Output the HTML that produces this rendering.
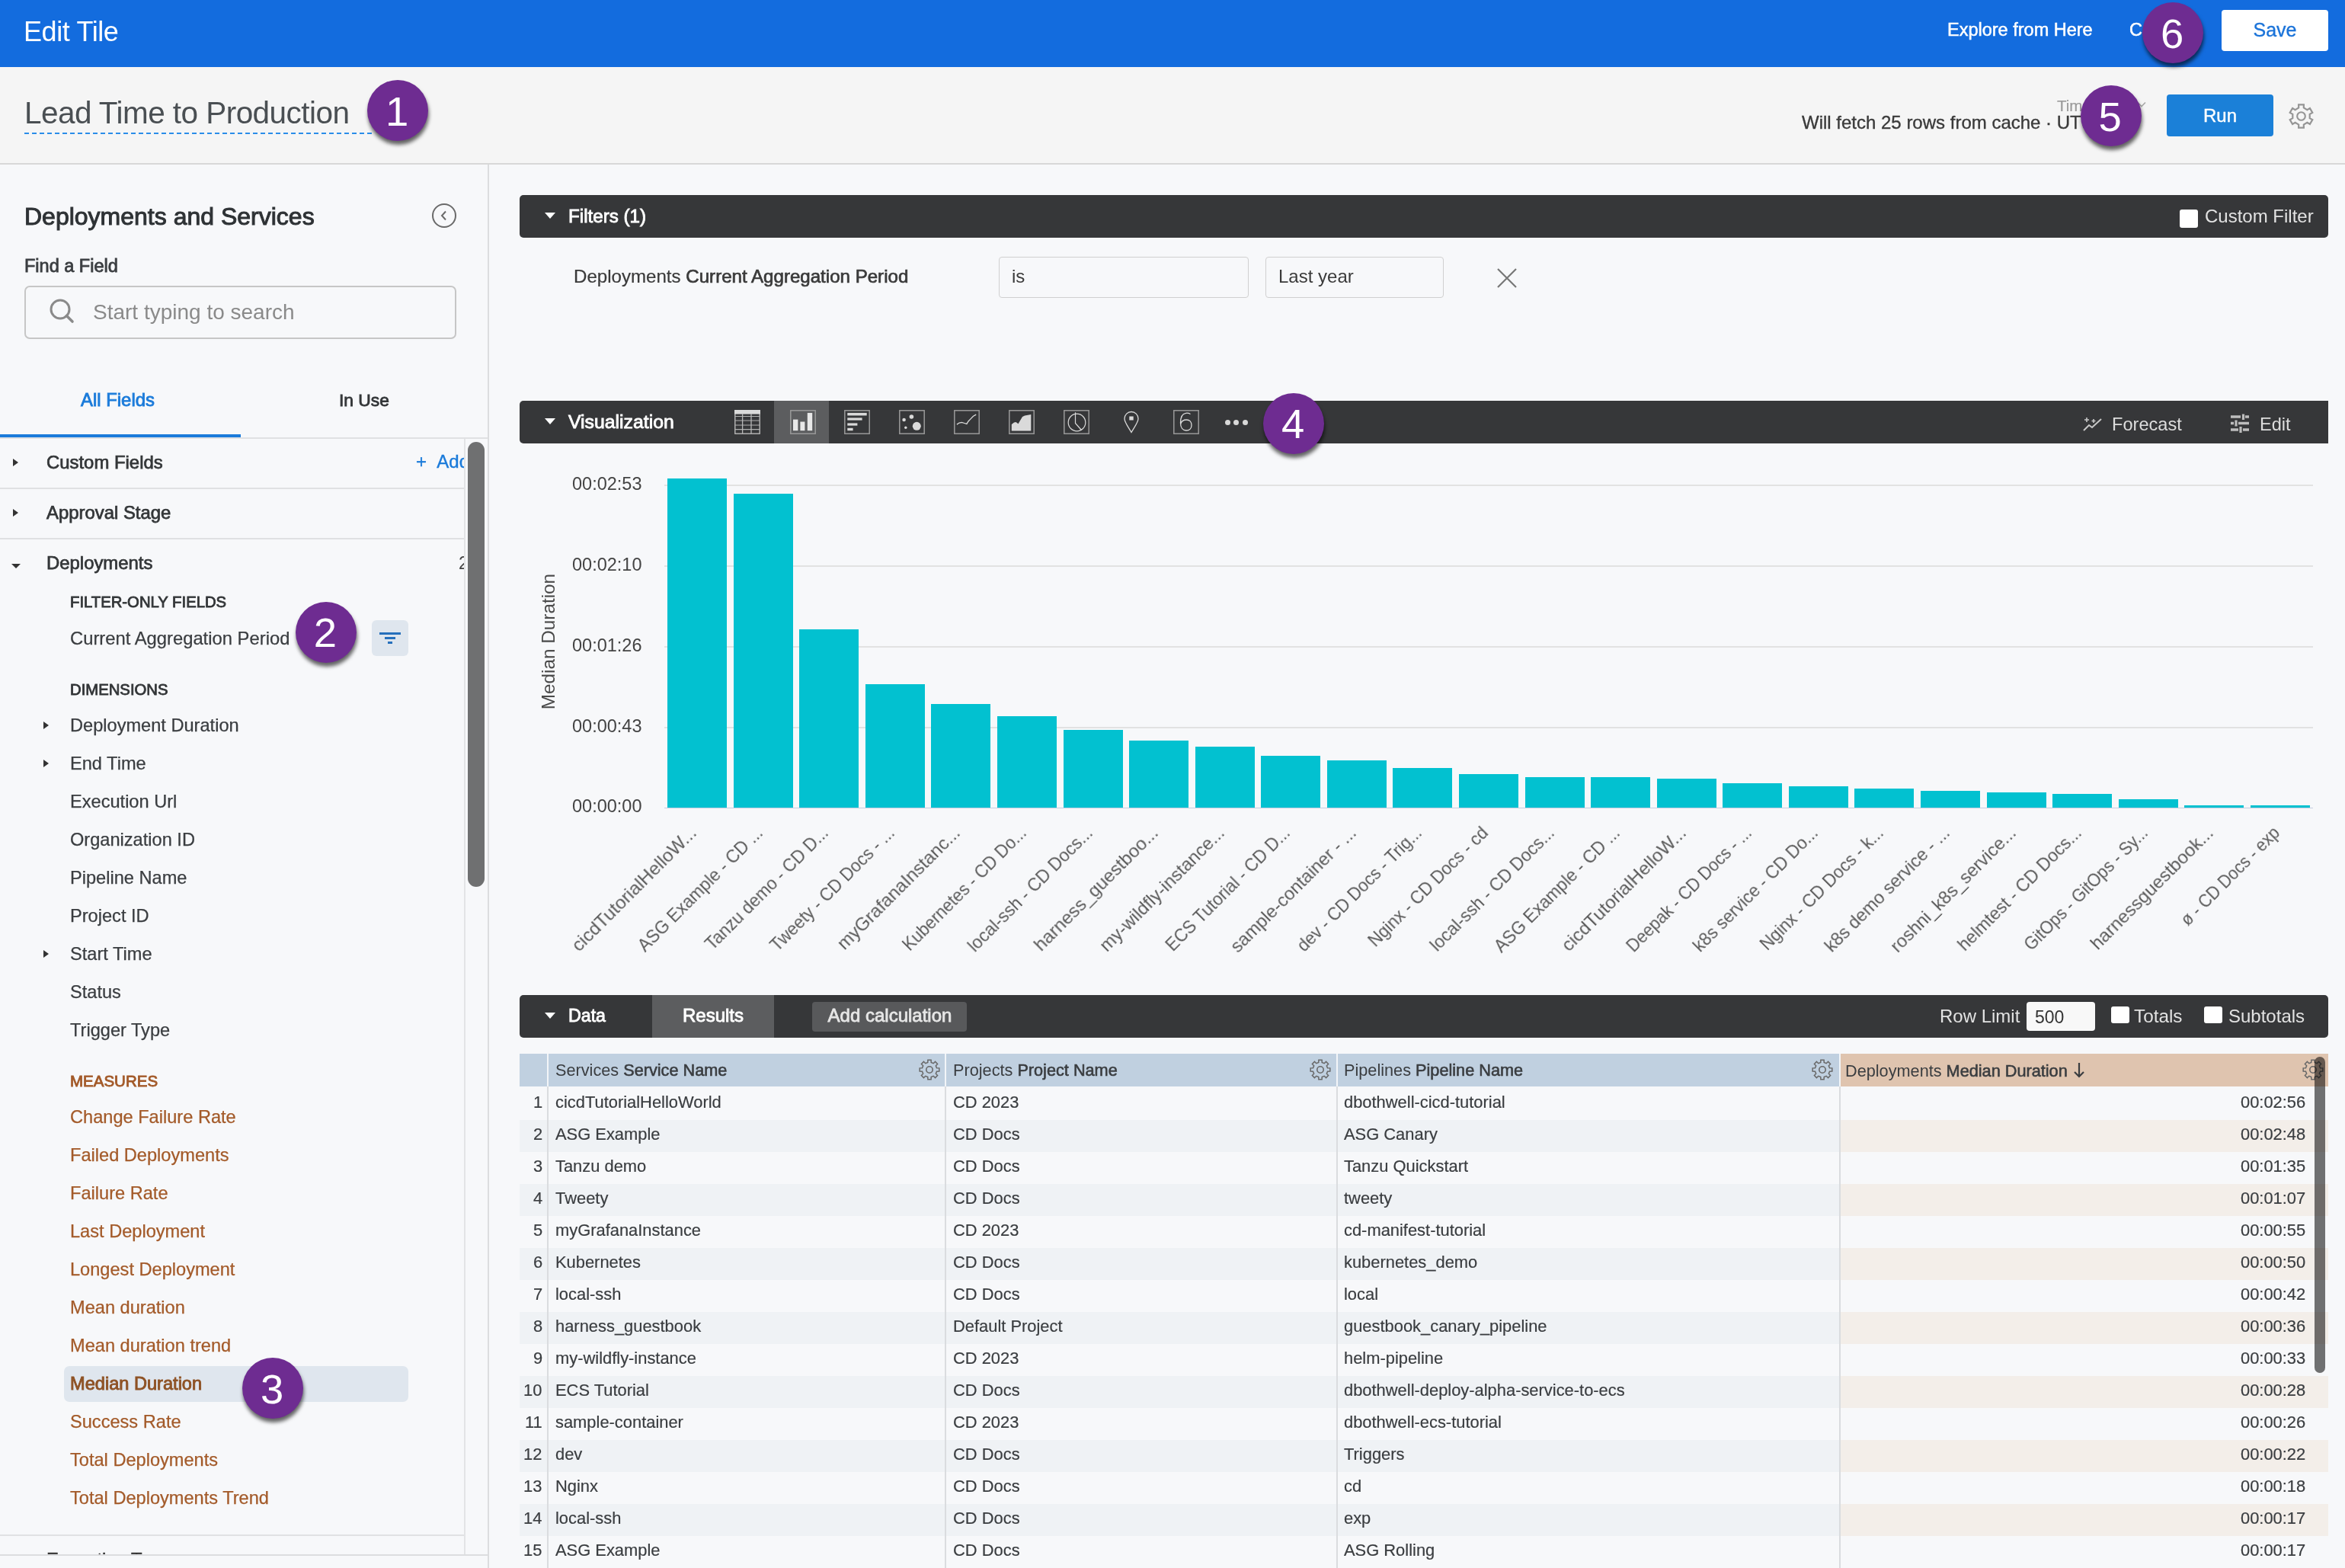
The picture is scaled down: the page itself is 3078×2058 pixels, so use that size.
<!DOCTYPE html>
<html><head><meta charset="utf-8"><title>Edit Tile</title><style>
html,body{margin:0;padding:0;width:3078px;height:2058px;overflow:hidden;background:#F7F8FA;}
body{position:relative;font-family:"Liberation Sans", sans-serif;}
.b{position:absolute;}
.t{position:absolute;white-space:nowrap;line-height:1;will-change:transform;}
.xl{width:400px;text-align:right;font-size:24px;color:#5A5A5A;transform:rotate(-45deg);transform-origin:400px 12px;}
.badge{position:absolute;border-radius:50%;background:#6E2C91;box-shadow:1px 5px 5px rgba(0,0,0,0.6);text-align:center;color:#fff;font-family:"Liberation Sans", sans-serif;}
.badge span{display:block;}
</style></head>
<body>
<div class="b" style="left:0.0px;top:0.0px;width:3078.0px;height:88.0px;background:#136CDE;"></div>
<div class="t" style="left:31.0px;top:24.1px;font-size:36px;color:#FFFFFF;font-weight:normal;letter-spacing:-0.4px;">Edit Tile</div>
<div class="t" style="left:2555.5px;top:28.1px;font-size:23.5px;color:#FFFFFF;font-weight:normal;-webkit-text-stroke:0.5px #FFFFFF;">Explore from Here</div>
<div class="t" style="left:2795.0px;top:28.1px;font-size:23.5px;color:#FFFFFF;font-weight:normal;-webkit-text-stroke:0.5px #FFFFFF;">Cancel</div>
<div class="b" style="left:2916.0px;top:12.6px;width:139.5px;height:54.4px;background:#FFFFFF;border-radius:4px;"></div>
<div class="t" style="left:2486.0px;width:1000px;text-align:center;top:27.1px;font-size:25px;color:#1A73D9;font-weight:normal;-webkit-text-stroke:0.35px #1A73D9;">Save</div>
<div class="b" style="left:0.0px;top:88.0px;width:3078.0px;height:126.0px;background:#F5F5F5;"></div>
<div class="b" style="left:0.0px;top:214.0px;width:3078.0px;height:2.0px;background:#D8D8D8;"></div>
<div class="t" style="left:32.0px;top:127.7px;font-size:40.5px;color:#4A4F53;font-weight:normal;letter-spacing:-0.55px;">Lead Time to Production</div>
<div class="b" style="left:32px;top:174px;width:460px;height:2px;background:repeating-linear-gradient(90deg,#2A8DE9 0 6px,transparent 6px 10px);"></div>
<div class="t" style="left:2364.7px;top:148.7px;font-size:24px;color:#3A3A3A;font-weight:normal;-webkit-text-stroke:0.35px #3A3A3A;">Will fetch 25 rows from cache &middot; UTC</div>
<div class="t" style="left:2700.0px;top:128.6px;font-size:20.5px;color:#9A9A9A;font-weight:normal;-webkit-text-stroke:0.2px #9A9A9A;">Time</div>
<div class="b" style="left:2844.0px;top:124.0px;width:139.5px;height:55.0px;background:#1B80D8;border-radius:4px;"></div>
<div class="t" style="left:2413.8px;width:1000px;text-align:center;top:139.7px;font-size:24px;color:#FFFFFF;font-weight:normal;-webkit-text-stroke:0.4px #FFFFFF;">Run</div>
<svg class="b" style="left:2804px;top:132px" width="14" height="10" viewBox="0 0 14 10"><path d="M2 2.5 L7 7.5 L12 2.5" fill="none" stroke="#A8A8A8" stroke-width="1.6"/></svg>
<svg class="b" style="left:3001.5px;top:133.5px" width="37.0" height="37.0" viewBox="0 0 37.0 37.0"><path d="M15.18 7.49 L15.12 3.37 L21.88 3.37 L21.82 7.49 L26.37 10.12 L29.91 8.01 L33.29 13.86 L29.70 15.87 L29.70 21.13 L33.29 23.14 L29.91 28.99 L26.37 26.88 L21.82 29.51 L21.88 33.63 L15.12 33.63 L15.18 29.51 L10.63 26.88 L7.09 28.99 L3.71 23.14 L7.30 21.13 L7.30 15.87 L3.71 13.86 L7.09 8.01 L10.63 10.12Z" fill="none" stroke="#959595" stroke-width="2.2" stroke-linejoin="miter"/><circle cx="18.5" cy="18.5" r="5.3" fill="none" stroke="#959595" stroke-width="2.1"/></svg>
<div class="b" style="left:0.0px;top:216.0px;width:640.0px;height:1842.0px;background:#F7F8FA;"></div>
<div class="b" style="left:640.0px;top:216.0px;width:2.0px;height:1842.0px;background:#DCDDDF;"></div>
<div class="t" style="left:32.4px;top:267.5px;font-size:32px;color:#2E3235;font-weight:normal;-webkit-text-stroke:1.0px #2E3235;">Deployments and Services</div>
<svg class="b" style="left:565px;top:265px" width="36" height="36" viewBox="0 0 36 36"><circle cx="18" cy="18" r="15" fill="none" stroke="#6A6A6A" stroke-width="2"/><path d="M20 12.5 L15 18 L20 23.5" fill="none" stroke="#6A6A6A" stroke-width="2"/></svg>
<div class="t" style="left:32.0px;top:338.1px;font-size:23.5px;color:#3A3D40;font-weight:normal;-webkit-text-stroke:0.8px #3A3D40;">Find a Field</div>
<div class="b" style="left:32.4px;top:374.8px;width:567.1px;height:70.2px;border:2px solid #C6C6C6;border-radius:7px;box-sizing:border-box;"></div>
<svg class="b" style="left:62px;top:390px" width="36" height="36" viewBox="0 0 36 36"><circle cx="17" cy="16" r="12" fill="none" stroke="#8A8A8A" stroke-width="3"/><path d="M25.5 24.5 L33 32" stroke="#8A8A8A" stroke-width="3.6" stroke-linecap="round"/></svg>
<div class="t" style="left:122.4px;top:396.1px;font-size:28px;color:#8A8A8A;font-weight:normal;">Start typing to search</div>
<div class="t" style="left:105.5px;top:512.8px;font-size:23.9px;color:#1B7BDA;font-weight:normal;-webkit-text-stroke:0.85px #1B7BDA;">All Fields</div>
<div class="t" style="left:444.7px;top:513.7px;font-size:22.8px;color:#333638;font-weight:normal;-webkit-text-stroke:0.85px #333638;">In Use</div>
<div class="b" style="left:0.0px;top:570.0px;width:316.0px;height:4.5px;background:#1B7BDA;"></div>
<div class="b" style="left:0.0px;top:574.0px;width:640.0px;height:2.0px;background:#E0E1E3;"></div>
<div class="b" style="left:608.5px;top:576.0px;width:2.0px;height:1465.0px;background:#E3E4E6;"></div>
<div class="b" style="left:613.6px;top:580.0px;width:22.4px;height:584.4px;background:rgba(0,0,0,0.55);border-radius:11px;"></div>
<div class="b" style="left:17.0px;top:602.0px;width:0;height:0;border-top:5.5px solid transparent;border-bottom:5.5px solid transparent;border-left:7px solid #333;"></div>
<div class="t" style="left:60.5px;top:594.8px;font-size:23.9px;color:#333638;font-weight:normal;-webkit-text-stroke:0.75px #333638;">Custom Fields</div>
<div class="b" style="left:540px;top:590px;width:69px;height:36px;overflow:hidden;"><div class="t" style="left:6px;top:4px;font-size:24px;color:#1B7BDA;-webkit-text-stroke:0.4px #1B7BDA;">+ &nbsp;Add</div></div>
<div class="b" style="left:0.0px;top:639.5px;width:609.0px;height:2.0px;background:#E0E1E3;"></div>
<div class="b" style="left:17.0px;top:668.0px;width:0;height:0;border-top:5.5px solid transparent;border-bottom:5.5px solid transparent;border-left:7px solid #333;"></div>
<div class="t" style="left:60.5px;top:660.8px;font-size:23.9px;color:#333638;font-weight:normal;-webkit-text-stroke:0.75px #333638;">Approval Stage</div>
<div class="b" style="left:0.0px;top:706.0px;width:609.0px;height:2.0px;background:#E0E1E3;"></div>
<div class="b" style="left:15.0px;top:739.5px;width:0;height:0;border-left:6px solid transparent;border-right:6px solid transparent;border-top:6px solid #333;"></div>
<div class="t" style="left:60.5px;top:726.8px;font-size:23.9px;color:#333638;font-weight:normal;-webkit-text-stroke:0.75px #333638;">Deployments</div>
<div class="b" style="left:598px;top:725px;width:11px;height:30px;overflow:hidden;"><div class="t" style="left:4px;top:3px;font-size:23px;color:#444;">25</div></div>
<div class="t" style="left:92.3px;top:780.2px;font-size:20.3px;color:#333638;font-weight:normal;-webkit-text-stroke:0.85px #333638;">FILTER-ONLY FIELDS</div>
<div class="t" style="left:92.3px;top:825.9px;font-size:23.8px;color:#3A3D40;font-weight:normal;-webkit-text-stroke:0.25px #3A3D40;">Current Aggregation Period</div>
<div class="b" style="left:488.0px;top:814.0px;width:48.0px;height:47.0px;background:#DFE6EE;border-radius:6px;"></div>
<svg class="b" style="left:496px;top:822px" width="32" height="32" viewBox="0 0 32 32"><path d="M2 9.5h28M9 15.5h14M13 21.5h6" stroke="#2670BC" stroke-width="2.8"/></svg>
<div class="t" style="left:92.3px;top:894.8px;font-size:20.3px;color:#333638;font-weight:normal;-webkit-text-stroke:0.85px #333638;">DIMENSIONS</div>
<div class="b" style="left:57.0px;top:947.0px;width:0;height:0;border-top:5.5px solid transparent;border-bottom:5.5px solid transparent;border-left:7px solid #333;"></div>
<div class="t" style="left:92.4px;top:940.5px;font-size:23.6px;color:#3A3D40;font-weight:normal;-webkit-text-stroke:0.25px #3A3D40;">Deployment Duration</div>
<div class="b" style="left:57.0px;top:997.0px;width:0;height:0;border-top:5.5px solid transparent;border-bottom:5.5px solid transparent;border-left:7px solid #333;"></div>
<div class="t" style="left:92.4px;top:990.5px;font-size:23.6px;color:#3A3D40;font-weight:normal;-webkit-text-stroke:0.25px #3A3D40;">End Time</div>
<div class="t" style="left:92.4px;top:1040.5px;font-size:23.6px;color:#3A3D40;font-weight:normal;-webkit-text-stroke:0.25px #3A3D40;">Execution Url</div>
<div class="t" style="left:92.4px;top:1090.5px;font-size:23.6px;color:#3A3D40;font-weight:normal;-webkit-text-stroke:0.25px #3A3D40;">Organization ID</div>
<div class="t" style="left:92.4px;top:1140.5px;font-size:23.6px;color:#3A3D40;font-weight:normal;-webkit-text-stroke:0.25px #3A3D40;">Pipeline Name</div>
<div class="t" style="left:92.4px;top:1190.5px;font-size:23.6px;color:#3A3D40;font-weight:normal;-webkit-text-stroke:0.25px #3A3D40;">Project ID</div>
<div class="b" style="left:57.0px;top:1247.0px;width:0;height:0;border-top:5.5px solid transparent;border-bottom:5.5px solid transparent;border-left:7px solid #333;"></div>
<div class="t" style="left:92.4px;top:1240.5px;font-size:23.6px;color:#3A3D40;font-weight:normal;-webkit-text-stroke:0.25px #3A3D40;">Start Time</div>
<div class="t" style="left:92.4px;top:1290.5px;font-size:23.6px;color:#3A3D40;font-weight:normal;-webkit-text-stroke:0.25px #3A3D40;">Status</div>
<div class="t" style="left:92.4px;top:1340.5px;font-size:23.6px;color:#3A3D40;font-weight:normal;-webkit-text-stroke:0.25px #3A3D40;">Trigger Type</div>
<div class="t" style="left:92.3px;top:1408.6px;font-size:20.5px;color:#A35A29;font-weight:normal;-webkit-text-stroke:0.85px #A35A29;">MEASURES</div>
<div class="b" style="left:84.0px;top:1792.5px;width:452.0px;height:47.0px;background:#DFE6EE;border-radius:7px;"></div>
<div class="t" style="left:92.0px;top:1454.8px;font-size:23.6px;color:#A35A29;font-weight:normal;-webkit-text-stroke:0.25px #A35A29;">Change Failure Rate</div>
<div class="t" style="left:92.0px;top:1504.8px;font-size:23.6px;color:#A35A29;font-weight:normal;-webkit-text-stroke:0.25px #A35A29;">Failed Deployments</div>
<div class="t" style="left:92.0px;top:1554.8px;font-size:23.6px;color:#A35A29;font-weight:normal;-webkit-text-stroke:0.25px #A35A29;">Failure Rate</div>
<div class="t" style="left:92.0px;top:1604.8px;font-size:23.6px;color:#A35A29;font-weight:normal;-webkit-text-stroke:0.25px #A35A29;">Last Deployment</div>
<div class="t" style="left:92.0px;top:1654.8px;font-size:23.6px;color:#A35A29;font-weight:normal;-webkit-text-stroke:0.25px #A35A29;">Longest Deployment</div>
<div class="t" style="left:92.0px;top:1704.8px;font-size:23.6px;color:#A35A29;font-weight:normal;-webkit-text-stroke:0.25px #A35A29;">Mean duration</div>
<div class="t" style="left:92.0px;top:1754.8px;font-size:23.6px;color:#A35A29;font-weight:normal;-webkit-text-stroke:0.25px #A35A29;">Mean duration trend</div>
<div class="t" style="left:92.0px;top:1804.8px;font-size:23.6px;color:#8E5225;font-weight:normal;-webkit-text-stroke:0.9px #8E5225;">Median Duration</div>
<div class="t" style="left:92.0px;top:1854.8px;font-size:23.6px;color:#A35A29;font-weight:normal;-webkit-text-stroke:0.25px #A35A29;">Success Rate</div>
<div class="t" style="left:92.0px;top:1904.8px;font-size:23.6px;color:#A35A29;font-weight:normal;-webkit-text-stroke:0.25px #A35A29;">Total Deployments</div>
<div class="t" style="left:92.0px;top:1954.8px;font-size:23.6px;color:#A35A29;font-weight:normal;-webkit-text-stroke:0.25px #A35A29;">Total Deployments Trend</div>
<div class="b" style="left:0.0px;top:2013.5px;width:609.0px;height:2.0px;background:#E0E1E3;"></div>
<div class="b" style="left:0;top:2020px;width:609px;height:20px;overflow:hidden;"><div class="t" style="left:61px;top:15px;font-size:23.9px;color:#333;-webkit-text-stroke:0.45px #333;">Execution Type</div></div>
<div class="b" style="left:0.0px;top:2039.5px;width:640.0px;height:2.0px;background:#DCDDDF;"></div>
<div class="b" style="left:0.0px;top:2041.5px;width:640.0px;height:16.5px;background:#F7F8FA;"></div>
<div class="b" style="left:642.0px;top:216.0px;width:2436.0px;height:1842.0px;background:#F7F8FA;"></div>
<div class="b" style="left:682.0px;top:256.0px;width:2374.0px;height:55.5px;background:#363739;border-radius:5px;"></div>
<div class="b" style="left:714.5px;top:278.8px;width:0;height:0;border-left:7.5px solid transparent;border-right:7.5px solid transparent;border-top:8.5px solid #FFFFFF;"></div>
<div class="t" style="left:745.8px;top:271.8px;font-size:24.2px;color:#FFFFFF;font-weight:normal;-webkit-text-stroke:0.85px #FFFFFF;">Filters (1)</div>
<div class="b" style="left:2861.0px;top:275.0px;width:24.0px;height:24.0px;background:#FFFFFF;border-radius:3px;"></div>
<div class="t" style="left:2893.5px;top:271.7px;font-size:24px;color:#E2E2E2;font-weight:normal;">Custom Filter</div>
<div class="t" style="left:752.6px;top:351.4px;font-size:24.1px;color:#3A3A3A;font-weight:normal;-webkit-text-stroke:0.2px #3A3A3A;">Deployments <span style="-webkit-text-stroke:0.7px #3A3A3A">Current Aggregation Period</span></div>
<div class="b" style="left:1310.7px;top:336.6px;width:328.3px;height:54.2px;border:1.5px solid #D0D0D0;border-radius:4px;box-sizing:border-box;"></div>
<div class="t" style="left:1327.8px;top:351.1px;font-size:24px;color:#3A3A3A;font-weight:normal;">is</div>
<div class="b" style="left:1661.0px;top:336.6px;width:234.0px;height:54.2px;border:1.5px solid #D0D0D0;border-radius:4px;box-sizing:border-box;"></div>
<div class="t" style="left:1678.0px;top:351.1px;font-size:24px;color:#3A3A3A;font-weight:normal;">Last year</div>
<svg class="b" style="left:1964px;top:351px" width="28" height="28" viewBox="0 0 28 28"><path d="M2 2L26 26M26 2L2 26" stroke="#777" stroke-width="2.2"/></svg>
<div class="b" style="left:682.0px;top:526.4px;width:2374.0px;height:55.2px;background:#363739;border-radius:5px 0 0 5px;"></div>
<div class="b" style="left:714.5px;top:548.8px;width:0;height:0;border-left:7.5px solid transparent;border-right:7.5px solid transparent;border-top:8.5px solid #FFFFFF;"></div>
<div class="t" style="left:745.5px;top:542.0px;font-size:24.8px;color:#FFFFFF;font-weight:normal;-webkit-text-stroke:0.85px #FFFFFF;">Visualization</div>
<div class="b" style="left:1016.3px;top:526.4px;width:71.7px;height:55.2px;background:#5C5D5F;"></div>
<svg class="b" style="left:964px;top:538.4px" width="34" height="32" viewBox="0 0 34 32"><rect x="0.8" y="0.8" width="32.4" height="30.4" fill="none" stroke="#B8B8B8" stroke-width="1.4"/><rect x="0" y="0" width="34" height="5.5" fill="#DADADA"/><path d="M0.5 8.5H33.5" stroke="#B0B0B0" stroke-width="1.2"/><path d="M0.5 14H33.5" stroke="#B0B0B0" stroke-width="1.2"/><path d="M0.5 20H33.5" stroke="#B0B0B0" stroke-width="1.2"/><path d="M0.5 25.7H33.5" stroke="#B0B0B0" stroke-width="1.2"/><path d="M10.6 5V31" stroke="#B8B8B8" stroke-width="1.3"/><path d="M22 5V31" stroke="#B8B8B8" stroke-width="1.3"/></svg>
<svg class="b" style="left:1036.6px;top:538.4px" width="34" height="32" viewBox="0 0 34 32"><rect x="0.8" y="0.8" width="32.4" height="30.4" fill="none" stroke="#9A9A9A" stroke-width="1.5"/><rect x="4" y="12.6" width="6.4" height="14.6" fill="#E8E8E8"/><rect x="13.4" y="15.5" width="6" height="11.7" fill="#E8E8E8"/><rect x="22.8" y="3.9" width="6.4" height="23.3" fill="#E8E8E8"/></svg>
<svg class="b" style="left:1108px;top:538.4px" width="34" height="32" viewBox="0 0 34 32"><rect x="0.8" y="0.8" width="32.4" height="30.4" fill="none" stroke="#9A9A9A" stroke-width="1.5"/><rect x="4.3" y="3.9" width="25.4" height="3.5" fill="#DADADA"/><rect x="4.3" y="10.4" width="19.3" height="3.2" fill="#DADADA"/><rect x="4.3" y="17.4" width="13.1" height="3.2" fill="#DADADA"/><rect x="4.3" y="23.8" width="7.3" height="3.4" fill="#DADADA"/></svg>
<svg class="b" style="left:1180.4px;top:538.4px" width="34" height="32" viewBox="0 0 34 32"><rect x="0.8" y="0.8" width="32.4" height="30.4" fill="none" stroke="#9A9A9A" stroke-width="1.5"/><circle cx="16.4" cy="9" r="2.8" fill="#DADADA"/><circle cx="6.6" cy="13" r="2.3" fill="#DADADA"/><circle cx="8.8" cy="23.2" r="1.7" fill="#DADADA"/><circle cx="23.3" cy="21.3" r="5.5" fill="#DADADA"/></svg>
<svg class="b" style="left:1252px;top:538.4px" width="34" height="32" viewBox="0 0 34 32"><rect x="0.8" y="0.8" width="32.4" height="30.4" fill="none" stroke="#9A9A9A" stroke-width="1.5"/><path d="M3.9 19.1 L7 17 L10.4 16.3 L14 17.5 L16.9 18.4 L19 15 L22 11.9 L25.5 8.3 L29.2 6.1" fill="none" stroke="#DADADA" stroke-width="1.3"/></svg>
<svg class="b" style="left:1324.3px;top:538.4px" width="34" height="32" viewBox="0 0 34 32"><rect x="0.8" y="0.8" width="32.4" height="30.4" fill="none" stroke="#9A9A9A" stroke-width="1.5"/><path d="M3.8 27.4 L3.8 19 L7 16.5 L9.5 16 L12.5 18.2 L15 14 L18 9 L21 7.5 L29.3 6 L29.3 27.4 Z" fill="#DADADA"/></svg>
<svg class="b" style="left:1396px;top:538.4px" width="34" height="32" viewBox="0 0 34 32"><rect x="0.8" y="0.8" width="32.4" height="30.4" fill="none" stroke="#9A9A9A" stroke-width="1.5"/><circle cx="17.5" cy="16.5" r="11.3" fill="none" stroke="#DADADA" stroke-width="1.2"/><path d="M15.5 3.2 V17.5 L23.5 26.5" fill="none" stroke="#DADADA" stroke-width="1.2"/></svg>
<svg class="b" style="left:1474px;top:539px" width="22" height="30" viewBox="0 0 22 30"><path d="M11 28.5 C 6 20 2 15 2 10.5 A 9 9 0 0 1 20 10.5 C 20 15 16 20 11 28.5 Z" fill="none" stroke="#DADADA" stroke-width="1.3"/><rect x="8.3" y="7.5" width="5.4" height="5" fill="#DADADA"/></svg>
<svg class="b" style="left:1540px;top:538.4px" width="34" height="32" viewBox="0 0 34 32"><rect x="0.8" y="0.8" width="32.4" height="30.4" fill="none" stroke="#9A9A9A" stroke-width="1.5"/><path d="M22.5 5.5 C 20.5 4.2 18.5 4 16.5 4.3 C 11.5 5 9.5 10 9.5 17 C 9.5 23.5 12.5 27 17 27 C 21.5 27 24 24 24 20 C 24 16 21.5 13 17.5 13 C 13.5 13 10.5 15.5 9.7 18.5" fill="none" stroke="#DADADA" stroke-width="1.3"/></svg>
<div class="b" style="left:1607.5px;top:550.5px;width:7px;height:7px;border-radius:50%;background:#D8D8D8;"></div>
<div class="b" style="left:1619.0px;top:550.5px;width:7px;height:7px;border-radius:50%;background:#D8D8D8;"></div>
<div class="b" style="left:1630.5px;top:550.5px;width:7px;height:7px;border-radius:50%;background:#D8D8D8;"></div>
<svg class="b" style="left:2733px;top:545px" width="27" height="22" viewBox="0 0 27 22"><path d="M2 20 L9 13 L13 16 L25 5" fill="none" stroke="#C8C8C8" stroke-width="2"/><path d="M6 3v6M3 6h6M15 5v5M12.5 7.5h5" stroke="#C8C8C8" stroke-width="1.6"/></svg>
<div class="t" style="left:2772.0px;top:545.5px;font-size:23.6px;color:#DDDDDD;font-weight:normal;">Forecast</div>
<svg class="b" style="left:2927px;top:543px" width="26" height="25" viewBox="0 0 26 25"><path d="M1 4h13M20 4h5M1 12.5h4M11 12.5h14M1 21h10M17 21h8" stroke="#BDBDBD" stroke-width="3.4"/><path d="M17.5 0.5v7.5M8 8.5v8M14 17v8" stroke="#BDBDBD" stroke-width="3.2"/></svg>
<div class="t" style="left:2965.5px;top:545.5px;font-size:23.6px;color:#DDDDDD;font-weight:normal;">Edit</div>
<div class="b" style="left:872.0px;top:635.9px;width:2164.0px;height:2.0px;background:#E2E2E2;"></div>
<div class="t" style="right:2236.0px;text-align:right;top:623.9px;font-size:23.5px;color:#444444;font-weight:normal;">00:02:53</div>
<div class="b" style="left:872.0px;top:742.0px;width:2164.0px;height:2.0px;background:#E2E2E2;"></div>
<div class="t" style="right:2236.0px;text-align:right;top:730.0px;font-size:23.5px;color:#444444;font-weight:normal;">00:02:10</div>
<div class="b" style="left:872.0px;top:847.8px;width:2164.0px;height:2.0px;background:#E2E2E2;"></div>
<div class="t" style="right:2236.0px;text-align:right;top:835.7px;font-size:23.5px;color:#444444;font-weight:normal;">00:01:26</div>
<div class="b" style="left:872.0px;top:953.7px;width:2164.0px;height:2.0px;background:#E2E2E2;"></div>
<div class="t" style="right:2236.0px;text-align:right;top:941.7px;font-size:23.5px;color:#444444;font-weight:normal;">00:00:43</div>
<div class="t" style="right:2236.0px;text-align:right;top:1047.3px;font-size:23.5px;color:#444444;font-weight:normal;">00:00:00</div>
<div class="b" style="left:876.0px;top:628.0px;width:78.0px;height:432.0px;background:#02C1D0;"></div>
<div class="b" style="left:962.6px;top:647.8px;width:78.0px;height:412.2px;background:#02C1D0;"></div>
<div class="b" style="left:1049.2px;top:826.0px;width:78.0px;height:234.0px;background:#02C1D0;"></div>
<div class="b" style="left:1135.7px;top:897.8px;width:78.0px;height:162.2px;background:#02C1D0;"></div>
<div class="b" style="left:1222.3px;top:923.8px;width:78.0px;height:136.2px;background:#02C1D0;"></div>
<div class="b" style="left:1308.9px;top:939.7px;width:78.0px;height:120.3px;background:#02C1D0;"></div>
<div class="b" style="left:1395.5px;top:958.0px;width:78.0px;height:102.0px;background:#02C1D0;"></div>
<div class="b" style="left:1482.1px;top:972.0px;width:78.0px;height:88.0px;background:#02C1D0;"></div>
<div class="b" style="left:1568.6px;top:980.0px;width:78.0px;height:80.0px;background:#02C1D0;"></div>
<div class="b" style="left:1655.2px;top:992.0px;width:78.0px;height:68.0px;background:#02C1D0;"></div>
<div class="b" style="left:1741.8px;top:998.0px;width:78.0px;height:62.0px;background:#02C1D0;"></div>
<div class="b" style="left:1828.4px;top:1007.8px;width:78.0px;height:52.2px;background:#02C1D0;"></div>
<div class="b" style="left:1915.0px;top:1015.8px;width:78.0px;height:44.2px;background:#02C1D0;"></div>
<div class="b" style="left:2001.5px;top:1020.0px;width:78.0px;height:40.0px;background:#02C1D0;"></div>
<div class="b" style="left:2088.1px;top:1020.0px;width:78.0px;height:40.0px;background:#02C1D0;"></div>
<div class="b" style="left:2174.7px;top:1021.8px;width:78.0px;height:38.2px;background:#02C1D0;"></div>
<div class="b" style="left:2261.3px;top:1028.0px;width:78.0px;height:32.0px;background:#02C1D0;"></div>
<div class="b" style="left:2347.9px;top:1031.6px;width:78.0px;height:28.4px;background:#02C1D0;"></div>
<div class="b" style="left:2434.4px;top:1035.4px;width:78.0px;height:24.6px;background:#02C1D0;"></div>
<div class="b" style="left:2521.0px;top:1037.7px;width:78.0px;height:22.3px;background:#02C1D0;"></div>
<div class="b" style="left:2607.6px;top:1040.0px;width:78.0px;height:20.0px;background:#02C1D0;"></div>
<div class="b" style="left:2694.2px;top:1042.0px;width:78.0px;height:18.0px;background:#02C1D0;"></div>
<div class="b" style="left:2780.8px;top:1049.4px;width:78.0px;height:10.6px;background:#02C1D0;"></div>
<div class="b" style="left:2867.3px;top:1057.4px;width:78.0px;height:2.6px;background:#02C1D0;"></div>
<div class="b" style="left:2953.9px;top:1057.4px;width:78.0px;height:2.6px;background:#02C1D0;"></div>
<div class="b" style="left:872.0px;top:1059.5px;width:2164.0px;height:1.5px;background:#C5CDE0;"></div>
<div class="t" style="left:620px;top:829.5px;width:200px;text-align:center;font-size:24.3px;color:#4A4A4A;transform:rotate(-90deg);transform-origin:100px 12px;">Median Duration</div>
<div class="t xl" style="left:510.0px;top:1077px;transform:rotate(-45deg) scaleX(1.01);">cicdTutorialHelloW...</div>
<div class="t xl" style="left:596.6px;top:1077px;transform:rotate(-45deg) scaleX(0.944);">ASG Example - CD ...</div>
<div class="t xl" style="left:683.2px;top:1077px;transform:rotate(-45deg) scaleX(0.941);">Tanzu demo - CD D...</div>
<div class="t xl" style="left:769.7px;top:1077px;transform:rotate(-45deg) scaleX(0.935);">Tweety - CD Docs - ...</div>
<div class="t xl" style="left:856.3px;top:1077px;transform:rotate(-45deg) scaleX(1.002);">myGrafanaInstanc...</div>
<div class="t xl" style="left:942.9px;top:1077px;transform:rotate(-45deg) scaleX(0.926);">Kubernetes - CD Do...</div>
<div class="t xl" style="left:1029.5px;top:1077px;transform:rotate(-45deg) scaleX(0.951);">local-ssh - CD Docs...</div>
<div class="t xl" style="left:1116.1px;top:1077px;transform:rotate(-45deg) scaleX(1.007);">harness_guestboo...</div>
<div class="t xl" style="left:1202.6px;top:1077px;transform:rotate(-45deg) scaleX(0.988);">my-wildfly-instance...</div>
<div class="t xl" style="left:1289.2px;top:1077px;transform:rotate(-45deg) scaleX(0.934);">ECS Tutorial - CD D...</div>
<div class="t xl" style="left:1375.8px;top:1077px;transform:rotate(-45deg) scaleX(0.984);">sample-container - ...</div>
<div class="t xl" style="left:1462.4px;top:1077px;transform:rotate(-45deg) scaleX(0.928);">dev - CD Docs - Trig...</div>
<div class="t xl" style="left:1549.0px;top:1077px;transform:rotate(-45deg) scaleX(0.937);">Nginx - CD Docs - cd</div>
<div class="t xl" style="left:1635.5px;top:1077px;transform:rotate(-45deg) scaleX(0.946);">local-ssh - CD Docs...</div>
<div class="t xl" style="left:1722.1px;top:1077px;transform:rotate(-45deg) scaleX(0.95);">ASG Example - CD ...</div>
<div class="t xl" style="left:1808.7px;top:1077px;transform:rotate(-45deg) scaleX(1.008);">cicdTutorialHelloW...</div>
<div class="t xl" style="left:1895.3px;top:1077px;transform:rotate(-45deg) scaleX(0.915);">Deepak - CD Docs - ...</div>
<div class="t xl" style="left:1981.9px;top:1077px;transform:rotate(-45deg) scaleX(0.945);">k8s service - CD Do...</div>
<div class="t xl" style="left:2068.4px;top:1077px;transform:rotate(-45deg) scaleX(0.938);">Nginx - CD Docs - k...</div>
<div class="t xl" style="left:2155.0px;top:1077px;transform:rotate(-45deg) scaleX(0.969);">k8s demo service - ...</div>
<div class="t xl" style="left:2241.6px;top:1077px;transform:rotate(-45deg) scaleX(0.983);">roshni_k8s_service...</div>
<div class="t xl" style="left:2328.2px;top:1077px;transform:rotate(-45deg) scaleX(0.959);">helmtest - CD Docs...</div>
<div class="t xl" style="left:2414.8px;top:1077px;transform:rotate(-45deg) scaleX(0.916);">GitOps - GitOps - Sy...</div>
<div class="t xl" style="left:2501.3px;top:1077px;transform:rotate(-45deg) scaleX(1.002);">harnessguestbook...</div>
<div class="t xl" style="left:2587.9px;top:1077px;transform:rotate(-45deg) scaleX(0.897);">&#248; - CD Docs - exp</div>
<div class="b" style="left:682.0px;top:1306.0px;width:2374.0px;height:56.0px;background:#363739;border-radius:5px;"></div>
<div class="b" style="left:714.5px;top:1328.8px;width:0;height:0;border-left:7.5px solid transparent;border-right:7.5px solid transparent;border-top:8.5px solid #FFFFFF;"></div>
<div class="t" style="left:746.0px;top:1321.7px;font-size:23.2px;color:#FFFFFF;font-weight:normal;-webkit-text-stroke:0.85px #FFFFFF;">Data</div>
<div class="b" style="left:856.0px;top:1306.0px;width:159.7px;height:56.0px;background:#5C5D5F;"></div>
<div class="t" style="left:435.9px;width:1000px;text-align:center;top:1321.0px;font-size:24px;color:#FFFFFF;font-weight:normal;-webkit-text-stroke:0.85px #FFFFFF;">Results</div>
<div class="b" style="left:1066.4px;top:1314.5px;width:203.0px;height:39.1px;background:#58595B;border-radius:4px;"></div>
<div class="t" style="left:667.9px;width:1000px;text-align:center;top:1321.0px;font-size:24px;color:#E6E6E6;font-weight:normal;-webkit-text-stroke:0.8px #E6E6E6;">Add calculation</div>
<div class="t" style="left:2546.0px;top:1322.2px;font-size:24px;color:#E2E2E2;font-weight:normal;">Row Limit</div>
<div class="b" style="left:2660.4px;top:1314.5px;width:89.3px;height:38.9px;background:#F8F8F8;border-radius:4px;"></div>
<div class="t" style="left:2670.7px;top:1323.5px;font-size:23px;color:#333333;font-weight:normal;">500</div>
<div class="b" style="left:2771.0px;top:1320.5px;width:23.5px;height:22.5px;background:#FFFFFF;border-radius:3px;"></div>
<div class="t" style="left:2801.0px;top:1321.7px;font-size:24.3px;color:#E2E2E2;font-weight:normal;">Totals</div>
<div class="b" style="left:2893.0px;top:1320.5px;width:23.5px;height:22.5px;background:#FFFFFF;border-radius:3px;"></div>
<div class="t" style="left:2924.5px;top:1322.0px;font-size:24px;color:#E2E2E2;font-weight:normal;">Subtotals</div>
<div class="b" style="left:682.0px;top:1382.5px;width:1733.4px;height:43.3px;background:#C0D0E0;"></div>
<div class="b" style="left:2415.4px;top:1382.5px;width:640.6px;height:43.3px;background:#DFC4AF;"></div>
<div class="b" style="left:682.0px;top:1469.7px;width:1733.4px;height:42.0px;background:#EFF2F5;"></div>
<div class="b" style="left:2415.4px;top:1469.7px;width:640.6px;height:42.0px;background:#F3EEE9;"></div>
<div class="b" style="left:682.0px;top:1553.7px;width:1733.4px;height:42.0px;background:#EFF2F5;"></div>
<div class="b" style="left:2415.4px;top:1553.7px;width:640.6px;height:42.0px;background:#F3EEE9;"></div>
<div class="b" style="left:682.0px;top:1637.7px;width:1733.4px;height:42.0px;background:#EFF2F5;"></div>
<div class="b" style="left:2415.4px;top:1637.7px;width:640.6px;height:42.0px;background:#F3EEE9;"></div>
<div class="b" style="left:682.0px;top:1721.7px;width:1733.4px;height:42.0px;background:#EFF2F5;"></div>
<div class="b" style="left:2415.4px;top:1721.7px;width:640.6px;height:42.0px;background:#F3EEE9;"></div>
<div class="b" style="left:682.0px;top:1805.7px;width:1733.4px;height:42.0px;background:#EFF2F5;"></div>
<div class="b" style="left:2415.4px;top:1805.7px;width:640.6px;height:42.0px;background:#F3EEE9;"></div>
<div class="b" style="left:682.0px;top:1889.7px;width:1733.4px;height:42.0px;background:#EFF2F5;"></div>
<div class="b" style="left:2415.4px;top:1889.7px;width:640.6px;height:42.0px;background:#F3EEE9;"></div>
<div class="b" style="left:682.0px;top:1973.7px;width:1733.4px;height:42.0px;background:#EFF2F5;"></div>
<div class="b" style="left:2415.4px;top:1973.7px;width:640.6px;height:42.0px;background:#F3EEE9;"></div>
<div class="b" style="left:717.7px;top:1382.5px;width:2.0px;height:43.3px;background:#F2F5F8;"></div>
<div class="b" style="left:717.7px;top:1425.8px;width:2.0px;height:632.2px;background:#DADCDF;"></div>
<div class="b" style="left:1239.7px;top:1382.5px;width:2.0px;height:43.3px;background:#F2F5F8;"></div>
<div class="b" style="left:1239.7px;top:1425.8px;width:2.0px;height:632.2px;background:#DADCDF;"></div>
<div class="b" style="left:1753.9px;top:1382.5px;width:2.0px;height:43.3px;background:#F2F5F8;"></div>
<div class="b" style="left:1753.9px;top:1425.8px;width:2.0px;height:632.2px;background:#DADCDF;"></div>
<div class="b" style="left:2414.4px;top:1382.5px;width:2.0px;height:43.3px;background:#F2F5F8;"></div>
<div class="b" style="left:2414.4px;top:1425.8px;width:2.0px;height:632.2px;background:#DADCDF;"></div>
<div class="t" style="left:729.0px;top:1393.6px;font-size:21.7px;color:#3A3D40;font-weight:normal;">Services <span style="-webkit-text-stroke:0.6px #3A3D40">Service Name</span></div>
<div class="t" style="left:1250.6px;top:1393.6px;font-size:21.7px;color:#3A3D40;font-weight:normal;">Projects <span style="-webkit-text-stroke:0.6px #3A3D40">Project Name</span></div>
<div class="t" style="left:1764.0px;top:1393.6px;font-size:21.7px;color:#3A3D40;font-weight:normal;">Pipelines <span style="-webkit-text-stroke:0.6px #3A3D40">Pipeline Name</span></div>
<div class="t" style="left:2422.0px;top:1393.6px;font-size:21.7px;color:#3A3D40;font-weight:normal;">Deployments <span style="-webkit-text-stroke:0.6px #3A3D40">Median Duration <svg width="16" height="21" viewBox="0 0 16 21" style="vertical-align:-2px;margin-left:1px"><path d="M8 1V19M2 13L8 19L14 13" fill="none" stroke="#3A3D40" stroke-width="2.2"/></svg></span></div>
<svg class="b" style="left:1204.0px;top:1388.0px" width="32.0" height="32.0" viewBox="0 0 32.0 32.0"><path d="M13.79 6.45 L13.87 3.18 L18.13 3.18 L18.21 6.45 L21.19 7.68 L23.56 5.42 L26.58 8.44 L24.32 10.81 L25.55 13.79 L28.82 13.87 L28.82 18.13 L25.55 18.21 L24.32 21.19 L26.58 23.56 L23.56 26.58 L21.19 24.32 L18.21 25.55 L18.13 28.82 L13.87 28.82 L13.79 25.55 L10.81 24.32 L8.44 26.58 L5.42 23.56 L7.68 21.19 L6.45 18.21 L3.18 18.13 L3.18 13.87 L6.45 13.79 L7.68 10.81 L5.42 8.44 L8.44 5.42 L10.81 7.68Z" fill="none" stroke="#686868" stroke-width="1.5" stroke-linejoin="miter"/><circle cx="16.0" cy="16.0" r="4.2" fill="none" stroke="#686868" stroke-width="1.6"/></svg>
<svg class="b" style="left:1717.0px;top:1388.0px" width="32.0" height="32.0" viewBox="0 0 32.0 32.0"><path d="M13.79 6.45 L13.87 3.18 L18.13 3.18 L18.21 6.45 L21.19 7.68 L23.56 5.42 L26.58 8.44 L24.32 10.81 L25.55 13.79 L28.82 13.87 L28.82 18.13 L25.55 18.21 L24.32 21.19 L26.58 23.56 L23.56 26.58 L21.19 24.32 L18.21 25.55 L18.13 28.82 L13.87 28.82 L13.79 25.55 L10.81 24.32 L8.44 26.58 L5.42 23.56 L7.68 21.19 L6.45 18.21 L3.18 18.13 L3.18 13.87 L6.45 13.79 L7.68 10.81 L5.42 8.44 L8.44 5.42 L10.81 7.68Z" fill="none" stroke="#686868" stroke-width="1.5" stroke-linejoin="miter"/><circle cx="16.0" cy="16.0" r="4.2" fill="none" stroke="#686868" stroke-width="1.6"/></svg>
<svg class="b" style="left:2376.4px;top:1388.0px" width="32.0" height="32.0" viewBox="0 0 32.0 32.0"><path d="M13.79 6.45 L13.87 3.18 L18.13 3.18 L18.21 6.45 L21.19 7.68 L23.56 5.42 L26.58 8.44 L24.32 10.81 L25.55 13.79 L28.82 13.87 L28.82 18.13 L25.55 18.21 L24.32 21.19 L26.58 23.56 L23.56 26.58 L21.19 24.32 L18.21 25.55 L18.13 28.82 L13.87 28.82 L13.79 25.55 L10.81 24.32 L8.44 26.58 L5.42 23.56 L7.68 21.19 L6.45 18.21 L3.18 18.13 L3.18 13.87 L6.45 13.79 L7.68 10.81 L5.42 8.44 L8.44 5.42 L10.81 7.68Z" fill="none" stroke="#686868" stroke-width="1.5" stroke-linejoin="miter"/><circle cx="16.0" cy="16.0" r="4.2" fill="none" stroke="#686868" stroke-width="1.6"/></svg>
<svg class="b" style="left:3020.0px;top:1388.0px" width="32.0" height="32.0" viewBox="0 0 32.0 32.0"><path d="M13.79 6.45 L13.87 3.18 L18.13 3.18 L18.21 6.45 L21.19 7.68 L23.56 5.42 L26.58 8.44 L24.32 10.81 L25.55 13.79 L28.82 13.87 L28.82 18.13 L25.55 18.21 L24.32 21.19 L26.58 23.56 L23.56 26.58 L21.19 24.32 L18.21 25.55 L18.13 28.82 L13.87 28.82 L13.79 25.55 L10.81 24.32 L8.44 26.58 L5.42 23.56 L7.68 21.19 L6.45 18.21 L3.18 18.13 L3.18 13.87 L6.45 13.79 L7.68 10.81 L5.42 8.44 L8.44 5.42 L10.81 7.68Z" fill="none" stroke="#686868" stroke-width="1.5" stroke-linejoin="miter"/><circle cx="16.0" cy="16.0" r="4.2" fill="none" stroke="#686868" stroke-width="1.6"/></svg>
<div class="t" style="right:2366.2px;text-align:right;top:1436.3px;font-size:21.9px;color:#3A3D40;font-weight:normal;-webkit-text-stroke:0.2px #3A3D40;">1</div>
<div class="t" style="left:729.0px;top:1436.3px;font-size:21.9px;color:#3A3D40;font-weight:normal;-webkit-text-stroke:0.2px #3A3D40;">cicdTutorialHelloWorld</div>
<div class="t" style="left:1250.6px;top:1436.3px;font-size:21.9px;color:#3A3D40;font-weight:normal;-webkit-text-stroke:0.2px #3A3D40;">CD 2023</div>
<div class="t" style="left:1764.0px;top:1436.3px;font-size:21.9px;color:#3A3D40;font-weight:normal;-webkit-text-stroke:0.2px #3A3D40;">dbothwell-cicd-tutorial</div>
<div class="t" style="right:51.5px;text-align:right;top:1436.3px;font-size:21.9px;color:#3A3D40;font-weight:normal;-webkit-text-stroke:0.2px #3A3D40;">00:02:56</div>
<div class="t" style="right:2366.2px;text-align:right;top:1478.3px;font-size:21.9px;color:#3A3D40;font-weight:normal;-webkit-text-stroke:0.2px #3A3D40;">2</div>
<div class="t" style="left:729.0px;top:1478.3px;font-size:21.9px;color:#3A3D40;font-weight:normal;-webkit-text-stroke:0.2px #3A3D40;">ASG Example</div>
<div class="t" style="left:1250.6px;top:1478.3px;font-size:21.9px;color:#3A3D40;font-weight:normal;-webkit-text-stroke:0.2px #3A3D40;">CD Docs</div>
<div class="t" style="left:1764.0px;top:1478.3px;font-size:21.9px;color:#3A3D40;font-weight:normal;-webkit-text-stroke:0.2px #3A3D40;">ASG Canary</div>
<div class="t" style="right:51.5px;text-align:right;top:1478.3px;font-size:21.9px;color:#3A3D40;font-weight:normal;-webkit-text-stroke:0.2px #3A3D40;">00:02:48</div>
<div class="t" style="right:2366.2px;text-align:right;top:1520.3px;font-size:21.9px;color:#3A3D40;font-weight:normal;-webkit-text-stroke:0.2px #3A3D40;">3</div>
<div class="t" style="left:729.0px;top:1520.3px;font-size:21.9px;color:#3A3D40;font-weight:normal;-webkit-text-stroke:0.2px #3A3D40;">Tanzu demo</div>
<div class="t" style="left:1250.6px;top:1520.3px;font-size:21.9px;color:#3A3D40;font-weight:normal;-webkit-text-stroke:0.2px #3A3D40;">CD Docs</div>
<div class="t" style="left:1764.0px;top:1520.3px;font-size:21.9px;color:#3A3D40;font-weight:normal;-webkit-text-stroke:0.2px #3A3D40;">Tanzu Quickstart</div>
<div class="t" style="right:51.5px;text-align:right;top:1520.3px;font-size:21.9px;color:#3A3D40;font-weight:normal;-webkit-text-stroke:0.2px #3A3D40;">00:01:35</div>
<div class="t" style="right:2366.2px;text-align:right;top:1562.3px;font-size:21.9px;color:#3A3D40;font-weight:normal;-webkit-text-stroke:0.2px #3A3D40;">4</div>
<div class="t" style="left:729.0px;top:1562.3px;font-size:21.9px;color:#3A3D40;font-weight:normal;-webkit-text-stroke:0.2px #3A3D40;">Tweety</div>
<div class="t" style="left:1250.6px;top:1562.3px;font-size:21.9px;color:#3A3D40;font-weight:normal;-webkit-text-stroke:0.2px #3A3D40;">CD Docs</div>
<div class="t" style="left:1764.0px;top:1562.3px;font-size:21.9px;color:#3A3D40;font-weight:normal;-webkit-text-stroke:0.2px #3A3D40;">tweety</div>
<div class="t" style="right:51.5px;text-align:right;top:1562.3px;font-size:21.9px;color:#3A3D40;font-weight:normal;-webkit-text-stroke:0.2px #3A3D40;">00:01:07</div>
<div class="t" style="right:2366.2px;text-align:right;top:1604.3px;font-size:21.9px;color:#3A3D40;font-weight:normal;-webkit-text-stroke:0.2px #3A3D40;">5</div>
<div class="t" style="left:729.0px;top:1604.3px;font-size:21.9px;color:#3A3D40;font-weight:normal;-webkit-text-stroke:0.2px #3A3D40;">myGrafanaInstance</div>
<div class="t" style="left:1250.6px;top:1604.3px;font-size:21.9px;color:#3A3D40;font-weight:normal;-webkit-text-stroke:0.2px #3A3D40;">CD 2023</div>
<div class="t" style="left:1764.0px;top:1604.3px;font-size:21.9px;color:#3A3D40;font-weight:normal;-webkit-text-stroke:0.2px #3A3D40;">cd-manifest-tutorial</div>
<div class="t" style="right:51.5px;text-align:right;top:1604.3px;font-size:21.9px;color:#3A3D40;font-weight:normal;-webkit-text-stroke:0.2px #3A3D40;">00:00:55</div>
<div class="t" style="right:2366.2px;text-align:right;top:1646.3px;font-size:21.9px;color:#3A3D40;font-weight:normal;-webkit-text-stroke:0.2px #3A3D40;">6</div>
<div class="t" style="left:729.0px;top:1646.3px;font-size:21.9px;color:#3A3D40;font-weight:normal;-webkit-text-stroke:0.2px #3A3D40;">Kubernetes</div>
<div class="t" style="left:1250.6px;top:1646.3px;font-size:21.9px;color:#3A3D40;font-weight:normal;-webkit-text-stroke:0.2px #3A3D40;">CD Docs</div>
<div class="t" style="left:1764.0px;top:1646.3px;font-size:21.9px;color:#3A3D40;font-weight:normal;-webkit-text-stroke:0.2px #3A3D40;">kubernetes_demo</div>
<div class="t" style="right:51.5px;text-align:right;top:1646.3px;font-size:21.9px;color:#3A3D40;font-weight:normal;-webkit-text-stroke:0.2px #3A3D40;">00:00:50</div>
<div class="t" style="right:2366.2px;text-align:right;top:1688.3px;font-size:21.9px;color:#3A3D40;font-weight:normal;-webkit-text-stroke:0.2px #3A3D40;">7</div>
<div class="t" style="left:729.0px;top:1688.3px;font-size:21.9px;color:#3A3D40;font-weight:normal;-webkit-text-stroke:0.2px #3A3D40;">local-ssh</div>
<div class="t" style="left:1250.6px;top:1688.3px;font-size:21.9px;color:#3A3D40;font-weight:normal;-webkit-text-stroke:0.2px #3A3D40;">CD Docs</div>
<div class="t" style="left:1764.0px;top:1688.3px;font-size:21.9px;color:#3A3D40;font-weight:normal;-webkit-text-stroke:0.2px #3A3D40;">local</div>
<div class="t" style="right:51.5px;text-align:right;top:1688.3px;font-size:21.9px;color:#3A3D40;font-weight:normal;-webkit-text-stroke:0.2px #3A3D40;">00:00:42</div>
<div class="t" style="right:2366.2px;text-align:right;top:1730.3px;font-size:21.9px;color:#3A3D40;font-weight:normal;-webkit-text-stroke:0.2px #3A3D40;">8</div>
<div class="t" style="left:729.0px;top:1730.3px;font-size:21.9px;color:#3A3D40;font-weight:normal;-webkit-text-stroke:0.2px #3A3D40;">harness_guestbook</div>
<div class="t" style="left:1250.6px;top:1730.3px;font-size:21.9px;color:#3A3D40;font-weight:normal;-webkit-text-stroke:0.2px #3A3D40;">Default Project</div>
<div class="t" style="left:1764.0px;top:1730.3px;font-size:21.9px;color:#3A3D40;font-weight:normal;-webkit-text-stroke:0.2px #3A3D40;">guestbook_canary_pipeline</div>
<div class="t" style="right:51.5px;text-align:right;top:1730.3px;font-size:21.9px;color:#3A3D40;font-weight:normal;-webkit-text-stroke:0.2px #3A3D40;">00:00:36</div>
<div class="t" style="right:2366.2px;text-align:right;top:1772.3px;font-size:21.9px;color:#3A3D40;font-weight:normal;-webkit-text-stroke:0.2px #3A3D40;">9</div>
<div class="t" style="left:729.0px;top:1772.3px;font-size:21.9px;color:#3A3D40;font-weight:normal;-webkit-text-stroke:0.2px #3A3D40;">my-wildfly-instance</div>
<div class="t" style="left:1250.6px;top:1772.3px;font-size:21.9px;color:#3A3D40;font-weight:normal;-webkit-text-stroke:0.2px #3A3D40;">CD 2023</div>
<div class="t" style="left:1764.0px;top:1772.3px;font-size:21.9px;color:#3A3D40;font-weight:normal;-webkit-text-stroke:0.2px #3A3D40;">helm-pipeline</div>
<div class="t" style="right:51.5px;text-align:right;top:1772.3px;font-size:21.9px;color:#3A3D40;font-weight:normal;-webkit-text-stroke:0.2px #3A3D40;">00:00:33</div>
<div class="t" style="right:2366.2px;text-align:right;top:1814.3px;font-size:21.9px;color:#3A3D40;font-weight:normal;-webkit-text-stroke:0.2px #3A3D40;">10</div>
<div class="t" style="left:729.0px;top:1814.3px;font-size:21.9px;color:#3A3D40;font-weight:normal;-webkit-text-stroke:0.2px #3A3D40;">ECS Tutorial</div>
<div class="t" style="left:1250.6px;top:1814.3px;font-size:21.9px;color:#3A3D40;font-weight:normal;-webkit-text-stroke:0.2px #3A3D40;">CD Docs</div>
<div class="t" style="left:1764.0px;top:1814.3px;font-size:21.9px;color:#3A3D40;font-weight:normal;-webkit-text-stroke:0.2px #3A3D40;">dbothwell-deploy-alpha-service-to-ecs</div>
<div class="t" style="right:51.5px;text-align:right;top:1814.3px;font-size:21.9px;color:#3A3D40;font-weight:normal;-webkit-text-stroke:0.2px #3A3D40;">00:00:28</div>
<div class="t" style="right:2366.2px;text-align:right;top:1856.3px;font-size:21.9px;color:#3A3D40;font-weight:normal;-webkit-text-stroke:0.2px #3A3D40;">11</div>
<div class="t" style="left:729.0px;top:1856.3px;font-size:21.9px;color:#3A3D40;font-weight:normal;-webkit-text-stroke:0.2px #3A3D40;">sample-container</div>
<div class="t" style="left:1250.6px;top:1856.3px;font-size:21.9px;color:#3A3D40;font-weight:normal;-webkit-text-stroke:0.2px #3A3D40;">CD 2023</div>
<div class="t" style="left:1764.0px;top:1856.3px;font-size:21.9px;color:#3A3D40;font-weight:normal;-webkit-text-stroke:0.2px #3A3D40;">dbothwell-ecs-tutorial</div>
<div class="t" style="right:51.5px;text-align:right;top:1856.3px;font-size:21.9px;color:#3A3D40;font-weight:normal;-webkit-text-stroke:0.2px #3A3D40;">00:00:26</div>
<div class="t" style="right:2366.2px;text-align:right;top:1898.3px;font-size:21.9px;color:#3A3D40;font-weight:normal;-webkit-text-stroke:0.2px #3A3D40;">12</div>
<div class="t" style="left:729.0px;top:1898.3px;font-size:21.9px;color:#3A3D40;font-weight:normal;-webkit-text-stroke:0.2px #3A3D40;">dev</div>
<div class="t" style="left:1250.6px;top:1898.3px;font-size:21.9px;color:#3A3D40;font-weight:normal;-webkit-text-stroke:0.2px #3A3D40;">CD Docs</div>
<div class="t" style="left:1764.0px;top:1898.3px;font-size:21.9px;color:#3A3D40;font-weight:normal;-webkit-text-stroke:0.2px #3A3D40;">Triggers</div>
<div class="t" style="right:51.5px;text-align:right;top:1898.3px;font-size:21.9px;color:#3A3D40;font-weight:normal;-webkit-text-stroke:0.2px #3A3D40;">00:00:22</div>
<div class="t" style="right:2366.2px;text-align:right;top:1940.3px;font-size:21.9px;color:#3A3D40;font-weight:normal;-webkit-text-stroke:0.2px #3A3D40;">13</div>
<div class="t" style="left:729.0px;top:1940.3px;font-size:21.9px;color:#3A3D40;font-weight:normal;-webkit-text-stroke:0.2px #3A3D40;">Nginx</div>
<div class="t" style="left:1250.6px;top:1940.3px;font-size:21.9px;color:#3A3D40;font-weight:normal;-webkit-text-stroke:0.2px #3A3D40;">CD Docs</div>
<div class="t" style="left:1764.0px;top:1940.3px;font-size:21.9px;color:#3A3D40;font-weight:normal;-webkit-text-stroke:0.2px #3A3D40;">cd</div>
<div class="t" style="right:51.5px;text-align:right;top:1940.3px;font-size:21.9px;color:#3A3D40;font-weight:normal;-webkit-text-stroke:0.2px #3A3D40;">00:00:18</div>
<div class="t" style="right:2366.2px;text-align:right;top:1982.3px;font-size:21.9px;color:#3A3D40;font-weight:normal;-webkit-text-stroke:0.2px #3A3D40;">14</div>
<div class="t" style="left:729.0px;top:1982.3px;font-size:21.9px;color:#3A3D40;font-weight:normal;-webkit-text-stroke:0.2px #3A3D40;">local-ssh</div>
<div class="t" style="left:1250.6px;top:1982.3px;font-size:21.9px;color:#3A3D40;font-weight:normal;-webkit-text-stroke:0.2px #3A3D40;">CD Docs</div>
<div class="t" style="left:1764.0px;top:1982.3px;font-size:21.9px;color:#3A3D40;font-weight:normal;-webkit-text-stroke:0.2px #3A3D40;">exp</div>
<div class="t" style="right:51.5px;text-align:right;top:1982.3px;font-size:21.9px;color:#3A3D40;font-weight:normal;-webkit-text-stroke:0.2px #3A3D40;">00:00:17</div>
<div class="t" style="right:2366.2px;text-align:right;top:2024.3px;font-size:21.9px;color:#3A3D40;font-weight:normal;-webkit-text-stroke:0.2px #3A3D40;">15</div>
<div class="t" style="left:729.0px;top:2024.3px;font-size:21.9px;color:#3A3D40;font-weight:normal;-webkit-text-stroke:0.2px #3A3D40;">ASG Example</div>
<div class="t" style="left:1250.6px;top:2024.3px;font-size:21.9px;color:#3A3D40;font-weight:normal;-webkit-text-stroke:0.2px #3A3D40;">CD Docs</div>
<div class="t" style="left:1764.0px;top:2024.3px;font-size:21.9px;color:#3A3D40;font-weight:normal;-webkit-text-stroke:0.2px #3A3D40;">ASG Rolling</div>
<div class="t" style="right:51.5px;text-align:right;top:2024.3px;font-size:21.9px;color:#3A3D40;font-weight:normal;-webkit-text-stroke:0.2px #3A3D40;">00:00:17</div>
<div class="b" style="left:3038.0px;top:1386.6px;width:14.0px;height:415.2px;background:rgba(0,0,0,0.55);border-radius:7px;"></div>
<div class="badge" style="left:482.0px;top:105.0px;width:80.0px;height:80.0px;"><span style="font-size:54.4px;line-height:80.0px;position:relative;top:1.5px;left:-1px;">1</span></div>
<div class="badge" style="left:387.8px;top:789.5px;width:80.0px;height:80.0px;"><span style="font-size:54.4px;line-height:80.0px;position:relative;top:1.5px;left:-1px;">2</span></div>
<div class="badge" style="left:318.0px;top:1782.0px;width:80.0px;height:80.0px;"><span style="font-size:54.4px;line-height:80.0px;position:relative;top:1.5px;left:-1px;">3</span></div>
<div class="badge" style="left:1658.0px;top:515.7px;width:80.0px;height:80.0px;"><span style="font-size:54.4px;line-height:80.0px;position:relative;top:1.5px;left:-1px;">4</span></div>
<div class="badge" style="left:2730.5px;top:112.0px;width:80.0px;height:80.0px;"><span style="font-size:54.4px;line-height:80.0px;position:relative;top:1.5px;left:-1px;">5</span></div>
<div class="badge" style="left:2812.0px;top:3.0px;width:80.0px;height:80.0px;"><span style="font-size:54.4px;line-height:80.0px;position:relative;top:1.5px;left:-1px;">6</span></div>
</body></html>
